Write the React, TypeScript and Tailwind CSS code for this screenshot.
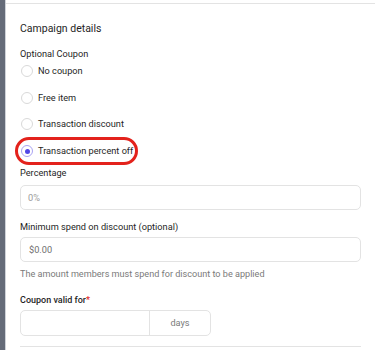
import React from "react";

const font = { fontFamily: "Roboto, 'Liberation Sans', sans-serif" };

function Radio({ label, checked }: { label: string; checked?: boolean }) {
  return (
    <div className="relative flex items-center h-[14px]">
      {checked ? (
        <span className="flex items-center justify-center w-[12px] h-[12px] rounded-full border border-[#a9a3f3] bg-white ml-[1px]">
          <span className="w-[5px] h-[5px] rounded-full bg-[#5046e6]" />
        </span>
      ) : (
        <span className="w-[12px] h-[12px] rounded-full border border-[#d9d9d9] bg-white ml-[1px]" />
      )}
      <span className="ml-[5px] text-[9.2px] leading-[12px] text-[#1f1f1f]">{label}</span>
      {checked && (
        <span className="absolute left-[-5px] top-[-7px] w-[123px] h-[28px] rounded-full border-[3px] border-[#e3221c] pointer-events-none" />
      )}
    </div>
  );
}

export default function App() {
  return (
    <div className="w-[375px] h-[350px] flex bg-white overflow-hidden" style={font}>
      <div className="w-[6px] shrink-0 bg-[#656c79] border-r border-[#cfd3d9]" />
      <div className="flex-1 mt-[3px] border-t border-[#e3e3e3] pl-[14px] pr-[14px] flex flex-col">
        <div className="mt-[19px] text-[10.5px] leading-[12px] text-[#1f1f1f]">Campaign details</div>
        <div className="mt-[13px] text-[9.2px] leading-[12px] text-[#1f1f1f]">Optional Coupon</div>
        <div className="mt-[4px] flex flex-col gap-[12.7px]">
          <Radio label="No coupon" />
          <Radio label="Free item" />
          <Radio label="Transaction discount" />
          <Radio label="Transaction percent off" checked />
        </div>
        <div className="mt-[9px] text-[9.2px] leading-[12px] text-[#1f1f1f]">Percentage</div>
        <div className="mt-[6px] h-[25px] rounded-[5px] border border-[#e3e3e3] flex items-center pl-[7px] text-[9.2px] text-[#9a9a9a]">
          0%
        </div>
        <div className="mt-[11px] text-[9.2px] leading-[12px] text-[#1f1f1f]">Minimum spend on discount (optional)</div>
        <div className="mt-[4px] h-[25px] rounded-[5px] border border-[#e3e3e3] flex items-center pl-[8px] text-[9.2px] text-[#6e6e6e]">
          $0.00
        </div>
        <div className="mt-[6px] text-[9.1px] leading-[12px] text-[#7a7a7a]">
          The amount members must spend for discount to be applied
        </div>
        <div className="mt-[14px] text-[9px] leading-[12px] font-medium text-[#1f1f1f]">
          Coupon valid for<span className="text-[#e3221c]">*</span>
        </div>
        <div className="mt-[4px] w-[191px] h-[26px] rounded-[5px] border border-[#e3e3e3] flex">
          <div className="w-[129px] border-r border-[#e3e3e3]" />
          <div className="flex-1 flex items-center justify-center text-[9.2px] text-[#7a7a7a]">days</div>
        </div>
        <div className="mt-[10px] border-t border-[#e3e3e3]" />
      </div>
    </div>
  );
}
